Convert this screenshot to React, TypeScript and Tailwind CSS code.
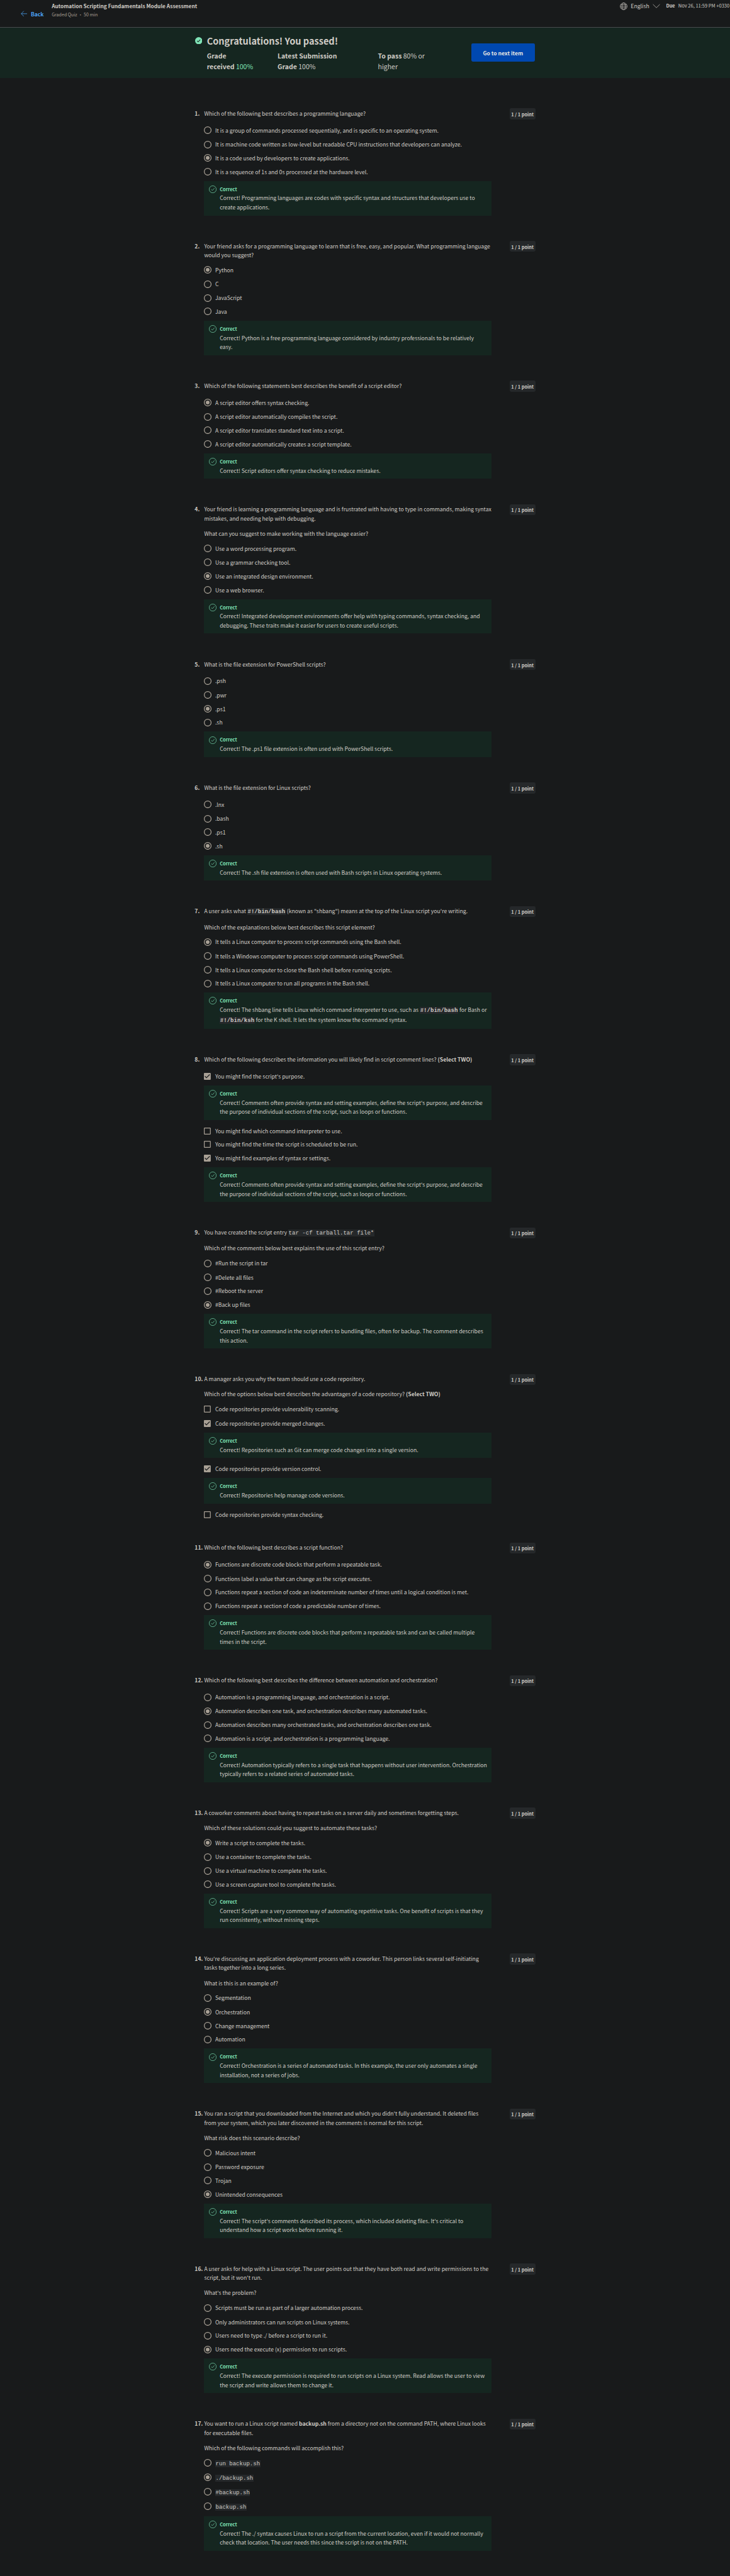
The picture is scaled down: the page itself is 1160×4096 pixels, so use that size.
import React from "react";

const Code = ({ children, bold }: { children: React.ReactNode; bold?: boolean }) => (
  <code className={`bg-[#25282a] px-0.25 font-['Liberation_Mono',monospace] text-[9.06px] leading-none whitespace-pre text-[#d0ccc6] ${bold ? "font-bold" : ""}`}>{children}</code>
);

type Opt = { t: React.ReactNode; on?: boolean; fb?: React.ReactNode; fbTall?: boolean };
type Question = { title: React.ReactNode[]; opts: Opt[]; multi?: boolean; tall?: boolean; code?: boolean };

// Single-choice list: one selected entry, with the feedback under the last one.
const r = (texts: React.ReactNode[], on: number, fb: React.ReactNode, fbTall = false): Opt[] =>
  texts.map((t, i) => ({ t, on: i === on, ...(i === texts.length - 1 ? { fb, fbTall } : {}) }));

const comments = (
  <>Correct! Comments often provide syntax and setting examples, define the script's purpose, and describe<br />the purpose of individual sections of the script, such as loops or functions.</>
);

const questions: Question[] = [
  {
    title: ["Which of the following best describes a programming language?"],
    opts: r(
      ["It is a group of commands processed sequentially, and is specific to an operating system.", "It is machine code written as low-level but readable CPU instructions that developers can analyze.", "It is a code used by developers to create applications.", "It is a sequence of 1s and 0s processed at the hardware level."],
      2,
      <>Correct! Programming languages are codes with specific syntax and structures that developers use to<br />create applications.</>,
    ),
  },
  {
    title: [<>Your friend asks for a programming language to learn that is free, easy, and popular. What programming language<br />would you suggest?</>],
    opts: r(["Python", "C", "JavaScript", "Java"], 0, <>Correct! Python is a free programming language considered by industry professionals to be relatively<br />easy.</>),
  },
  {
    title: ["Which of the following statements best describes the benefit of a script editor?"],
    opts: r(
      ["A script editor offers syntax checking.", "A script editor automatically compiles the script.", "A script editor translates standard text into a script.", "A script editor automatically creates a script template."],
      0,
      "Correct! Script editors offer syntax checking to reduce mistakes.",
    ),
  },
  {
    title: [
      <>Your friend is learning a programming language and is frustrated with having to type in commands, making syntax<br />mistakes, and needing help with debugging.</>,
      "What can you suggest to make working with the language easier?",
    ],
    opts: r(
      ["Use a word processing program.", "Use a grammar checking tool.", "Use an integrated design environment.", "Use a web browser."],
      2,
      <>Correct! Integrated development environments offer help with typing commands, syntax checking, and<br />debugging. These traits make it easier for users to create useful scripts.</>,
    ),
  },
  {
    title: ["What is the file extension for PowerShell scripts?"],
    opts: r([".psh", ".pwr", ".ps1", ".sh"], 2, "Correct! The .ps1 file extension is often used with PowerShell scripts."),
  },
  {
    title: ["What is the file extension for Linux scripts?"],
    opts: r([".lnx", ".bash", ".ps1", ".sh"], 3, "Correct! The .sh file extension is often used with Bash scripts in Linux operating systems."),
  },
  {
    tall: true,
    title: [<>A user asks what <Code bold>#!/bin/bash</Code> (known as "shbang") means at the top of the Linux script you're writing.</>, "Which of the explanations below best describes this script element?"],
    opts: r(
      ["It tells a Linux computer to process script commands using the Bash shell.", "It tells a Windows computer to process script commands using PowerShell.", "It tells a Linux computer to close the Bash shell before running scripts.", "It tells a Linux computer to run all programs in the Bash shell."],
      0,
      <>Correct! The shbang line tells Linux which command interpreter to use, such as <Code bold>#!/bin/bash</Code> for Bash or<br /><Code bold>#!/bin/ksh</Code> for the K shell. It lets the system know the command syntax.</>,
      true,
    ),
  },
  {
    multi: true,
    title: [<>Which of the following describes the information you will likely find in script comment lines? <b>(Select TWO)</b></>],
    opts: [
      { t: "You might find the script's purpose.", on: true, fb: comments },
      { t: "You might find which command interpreter to use." },
      { t: "You might find the time the script is scheduled to be run." },
      { t: "You might find examples of syntax or settings.", on: true, fb: comments },
    ],
  },
  {
    tall: true,
    title: [<>You have created the script entry <Code>tar -cf tarball.tar file*</Code></>, "Which of the comments below best explains the use of this script entry?"],
    opts: r(
      ["#Run the script in tar", "#Delete all files", "#Reboot the server", "#Back up files"],
      3,
      <>Correct! The tar command in the script refers to bundling files, often for backup. The comment describes<br />this action.</>,
    ),
  },
  {
    multi: true,
    title: ["A manager asks you why the team should use a code repository.", <>Which of the options below best describes the advantages of a code repository? <b>(Select TWO)</b></>],
    opts: [
      { t: "Code repositories provide vulnerability scanning." },
      { t: "Code repositories provide merged changes.", on: true, fb: "Correct! Repositories such as Git can merge code changes into a single version." },
      { t: "Code repositories provide version control.", on: true, fb: "Correct! Repositories help manage code versions." },
      { t: "Code repositories provide syntax checking." },
    ],
  },
  {
    title: ["Which of the following best describes a script function?"],
    opts: r(
      ["Functions are discrete code blocks that perform a repeatable task.", "Functions label a value that can change as the script executes.", "Functions repeat a section of code an indeterminate number of times until a logical condition is met.", "Functions repeat a section of code a predictable number of times."],
      0,
      <>Correct! Functions are discrete code blocks that perform a repeatable task and can be called multiple<br />times in the script.</>,
    ),
  },
  {
    title: ["Which of the following best describes the difference between automation and orchestration?"],
    opts: r(
      ["Automation is a programming language, and orchestration is a script.", "Automation describes one task, and orchestration describes many automated tasks.", "Automation describes many orchestrated tasks, and orchestration describes one task.", "Automation is a script, and orchestration is a programming language."],
      1,
      <>Correct! Automation typically refers to a single task that happens without user intervention. Orchestration<br />typically refers to a related series of automated tasks.</>,
    ),
  },
  {
    title: ["A coworker comments about having to repeat tasks on a server daily and sometimes forgetting steps.", "Which of these solutions could you suggest to automate these tasks?"],
    opts: r(
      ["Write a script to complete the tasks.", "Use a container to complete the tasks.", "Use a virtual machine to complete the tasks.", "Use a screen capture tool to complete the tasks."],
      0,
      <>Correct! Scripts are a very common way of automating repetitive tasks. One benefit of scripts is that they<br />run consistently, without missing steps.</>,
    ),
  },
  {
    title: [
      <>You're discussing an application deployment process with a coworker. This person links several self-initiating<br />tasks together into a long series.</>,
      "What is this is an example of?",
    ],
    opts: r(
      ["Segmentation", "Orchestration", "Change management", "Automation"],
      1,
      <>Correct! Orchestration is a series of automated tasks. In this example, the user only automates a single<br />installation, not a series of jobs.</>,
    ),
  },
  {
    title: [
      <>You ran a script that you downloaded from the Internet and which you didn't fully understand. It deleted files<br />from your system, which you later discovered in the comments is normal for this script.</>,
      "What risk does this scenario describe?",
    ],
    opts: r(
      ["Malicious intent", "Password exposure", "Trojan", "Unintended consequences"],
      3,
      <>Correct! The script's comments described its process, which included deleting files. It's critical to<br />understand how a script works before running it.</>,
    ),
  },
  {
    title: [
      <>A user asks for help with a Linux script. The user points out that they have both read and write permissions to the<br />script, but it won't run.</>,
      "What's the problem?",
    ],
    opts: r(
      ["Scripts must be run as part of a larger automation process.", "Only administrators can run scripts on Linux systems.", "Users need to type ./ before a script to run it.", "Users need the execute (x) permission to run scripts."],
      3,
      <>Correct! The execute permission is required to run scripts on a Linux system. Read allows the user to view<br />the script and write allows them to change it.</>,
    ),
  },
  {
    code: true,
    title: [
      <>You want to run a Linux script named <b>backup.sh</b> from a directory not on the command PATH, where Linux looks<br />for executable files.</>,
      "Which of the following commands will accomplish this?",
    ],
    opts: r(
      [<Code>run backup.sh</Code>, <Code>./backup.sh</Code>, <Code>#backup.sh</Code>, <Code>backup.sh</Code>],
      1,
      <>Correct! The ./ syntax causes Linux to run a script from the current location, even if it would not normally<br />check that location. The user needs this since the script is not on the PATH.</>,
    ),
  },
];

function Radio({ on }: { on?: boolean }) {
  return (
    <svg viewBox="0 0 20 20" className="-ml-0.25 size-5 shrink-0" fill="none">
      <circle cx="10" cy="10" r="9" stroke="#a8a095" strokeWidth="2" />
      {on && <circle cx="10" cy="10" r="5" fill="#a8a095" />}
    </svg>
  );
}

function Check({ on }: { on?: boolean }) {
  return (
    <svg viewBox="0 0 18 18" className="mr-0.25 size-4.5 shrink-0" fill="none">
      <rect x="1" y="1" width="16" height="16" rx="1" stroke="#a8a095" strokeWidth="2" fill={on ? "#a8a095" : "none"} />
      {on && <path d="M2.7 8.7l4 4L15.4 4.2" stroke="#181a1b" strokeWidth="2" />}
    </svg>
  );
}

function Feedback({ children, tall }: { children: React.ReactNode; tall?: boolean }) {
  return (
    <div className="mt-1.5 mb-2.75 flex bg-[#152620] py-2.5 pl-3">
      <svg viewBox="0 0 20 20" className="mt-0.5 mr-2.25 size-5 shrink-0" fill="none" stroke="#7fe3b6">
        <circle cx="10" cy="10" r="9.3" strokeWidth="1.1" />
        <path d="M5.9 10l3.1 3.1 5.5-6.2" strokeWidth="1.1" />
      </svg>
      <div>
        <div className="h-5.75 text-[7.49px] leading-6 font-bold text-[#7fe3b6]">Correct</div>
        <p className={tall ? "leading-6.5" : "leading-6"}>{children}</p>
      </div>
    </div>
  );
}

function Item({ q, n }: { q: Question; n: number }) {
  return (
    <section className="flex items-start pb-14">
      <div className="w-6.25 shrink-0 pt-0.25 leading-6 font-bold">{n}.</div>
      <div className="w-189 shrink-0">
        <div className={`mb-2.5 flex min-h-7.5 flex-col gap-4 pt-0.25 leading-6 ${q.tall ? "[&>p:first-child]:h-6.5" : ""}`}>
          {q.title.map((t, i) => (
            <p key={i}>{t}</p>
          ))}
        </div>
        {q.opts.map((o, i) => (
          <React.Fragment key={i}>
            <div className={`flex items-center gap-2.5 ${q.code ? "h-9.5 pb-0.5" : "h-9"} ${i === 0 && !q.code ? "mb-0.25" : ""}`}>
              {q.multi ? <Check on={o.on} /> : <Radio on={o.on} />}
              <span className={q.code ? "pt-0.25" : ""}>{o.t}</span>
            </div>
            {o.fb && <Feedback tall={o.fbTall}>{o.fb}</Feedback>}
          </React.Fragment>
        ))}
      </div>
      <div className="ml-11.75 flex h-7.25 w-17 shrink-0 items-center justify-center rounded-[2.4px] bg-[#25282a] pt-0.25 text-[7.35px] font-bold">1 / 1 point</div>
    </section>
  );
}

export default function App() {
  return (
    <div className="h-[4096px] w-[1160px] overflow-hidden bg-[#181a1b] font-['Noto_Sans_CJK_SC',sans-serif] text-[8.67px] whitespace-nowrap text-[#d0ccc6] [--spacing:2.416667px]">
      <header className="flex h-18.25 items-start border-b border-[#484b4d]">
        <div className="flex h-full w-34 shrink-0 items-center gap-2.5 pl-13.5 text-[8.54px] font-bold text-[#4ba3f5]">
          <svg viewBox="0 0 17 16" className="h-4 w-4.25" fill="none" stroke="#4ba3f5" strokeWidth="1.3">
            <path d="M8 1L1.2 8 8 15M1.2 8H17" />
          </svg>
          <span className="pt-0.5">Back</span>
        </div>
        <div className="pt-1">
          <h1 className="h-5.5 text-[8.33px] leading-6 font-bold">Automation Scripting Fundamentals Module Assessment</h1>
          <p className="text-[7.09px] leading-6 text-[#a69e92]">Graded Quiz • 50 min</p>
        </div>
        <div className="ml-auto flex w-72.25 shrink-0 items-center pt-1 leading-6">
          <svg viewBox="0 0 20 20" className="mr-2 size-5 shrink-0" fill="none" stroke="#d0ccc6" strokeWidth="1.1">
            <circle cx="10" cy="10" r="9" />
            <ellipse cx="10" cy="10" rx="4.5" ry="9" />
            <path d="M1 10h18M2.2 5.8h15.6M2.2 14.2h15.6" />
          </svg>
          <span className="w-14.25 shrink-0">English</span>
          <svg viewBox="0 0 20 12" className="mr-4 h-3 w-5 shrink-0" fill="none" stroke="#d0ccc6" strokeWidth="1.2">
            <path d="M1 1.5l9 9 9-9" />
          </svg>
          <b className="w-8 shrink-0 text-[7.3px]">Due</b>
          <span className="text-[7.5px]">Nov 26, 11:59 PM +0330</span>
        </div>
      </header>

      <div className="flex h-33 bg-[#152620] pl-128.25">
        <svg viewBox="0 0 20 20" className="mt-6 mr-3 size-4.75 shrink-0">
          <circle cx="10" cy="10" r="10" fill="#7fe3b6" />
          <path d="M5.6 10.2l3 3 5.6-6" fill="none" stroke="#152620" strokeWidth="1.8" />
        </svg>
        <div className="w-173.75 shrink-0 pt-4">
          <h2 className="h-11.25 text-[14.54px] leading-9 font-bold">Congratulations! You passed!</h2>
          <div className="flex text-[10.5px] leading-7">
            <p className="w-46.5"><b>Grade<br />received</b> <span className="text-[#7fe3b6]">100%</span></p>
            <p className="w-66"><b>Latest Submission<br />Grade</b> 100%</p>
            <p><b>To pass</b> 80% or<br />higher</p>
          </div>
        </div>
        <button className="mt-10.5 h-12 w-42 rounded-[2.4px] bg-[#0048b0] text-[8.54px] font-bold text-[#e8e6e3]">Go to next item</button>
      </div>

      <main className="pt-20 pl-128">
        {questions.map((q, i) => (
          <Item key={i} q={q} n={i + 1} />
        ))}
      </main>
    </div>
  );
}
